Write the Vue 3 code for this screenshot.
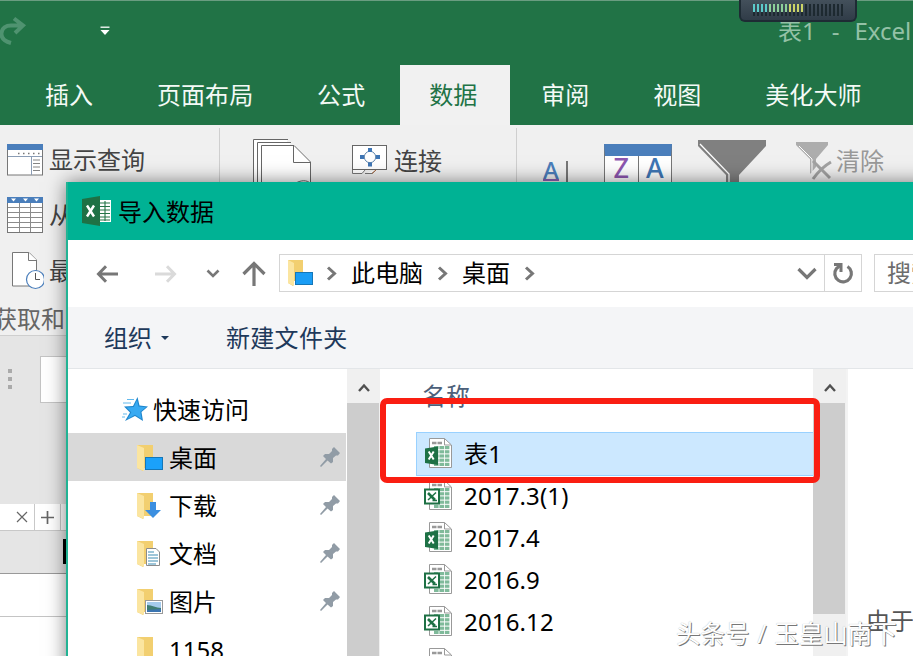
<script setup>
const tabs = ['插入', '页面布局', '公式', '数据', '审阅', '视图', '美化大师']
const places = [
  { name: '桌面', kind: 'desktop', pinned: true, active: true },
  { name: '下载', kind: 'download', pinned: true },
  { name: '文档', kind: 'doc', pinned: true },
  { name: '图片', kind: 'pic', pinned: true },
  { name: '1158', kind: 'plain' },
]
const files = [
  { name: '表1', modern: true, active: true },
  { name: '2017.3(1)' },
  { name: '2017.4', modern: true },
  { name: '2016.9' },
  { name: '2016.12' },
  { name: '2016.10(1)' },
]
const cells = [0, 1, 2, 3, 4].flatMap((r) => [0, 1, 2].map((c) => ({ x: 10 + c * 5.4, y: 8 + r * 4.2 })))
const bars = Array.from({ length: 23 }, (_, i) => i)
</script>

<template>
  <div class="screen">
    <header class="titlebar">
      <svg class="redo" width="30" height="30" viewBox="0 0 30 30" fill="none" stroke="#4f9370" stroke-width="4">
        <path d="M12 27C5 25 2 21 2.500 17C3 12 7 9.500 12 9.500H24M15 2.500L24 9.500L16 17" />
      </svg>
      <svg class="qat" width="10" height="10" viewBox="0 0 10 10">
        <path d="M0.500 1.200H9.500" stroke="#fff" stroke-width="1.300" /><path d="M0.500 4H9.500L5 9Z" fill="#fff" />
      </svg>
      <span class="doc-title">表1<i>-</i>Excel</span>
    </header>
    <nav class="tabs">
      <span v-for="t in tabs" :key="t" class="tab" :class="{ current: t === '数据' }">{{ t }}</span>
    </nav>

    <section class="ribbon">
      <div class="group query">
        <div class="cmd">
          <svg width="37" height="32" viewBox="0 0 37 32">
            <rect x=".5" y=".5" width="35" height="30.500" fill="#fff" stroke="#777" />
            <rect width="36" height="6" fill="#4a7ebb" />
            <path d="M11 9.500H35" stroke="#777" stroke-width="1.500" stroke-dasharray="1.500 3.500" />
            <path d="M1 12.500H35M24.500 13V31" stroke="#8b9db5" />
            <path d="M26 16H33M26 19.500H33M26 23H33M26 26.500H33" stroke="#777" stroke-width=".9" />
          </svg>
          <span>显示查询</span>
        </div>
        <div class="cmd">
          <svg width="37" height="37" viewBox="0 0 37 37">
            <rect x=".5" y=".5" width="35" height="35" fill="#fff" stroke="#777" />
            <rect width="36" height="6" fill="#4a7ebb" />
            <path d="M4 1.500H9L6.500 4.500ZM16 1.500H21L18.500 4.500ZM27 1.500H32L29.500 4.500Z" fill="#fff" />
            <path d="M1 10.500H35M1 15.500H35M1 20.500H35M1 25.500H35M1 30.500H35M12.500 6V35M23.500 6V35" stroke="#8b8b8b" />
          </svg>
          <span>从</span>
        </div>
        <div class="cmd">
          <svg width="37" height="38" viewBox="0 0 37 38" fill="#fff" stroke="#777">
            <path d="M5.500 .5H22L29.500 8V34H5.500Z" /><path d="M21.500 .5V8.500H30" />
            <circle cx="28.500" cy="27.500" r="9" stroke="#4a7ebb" stroke-width="1.200" /><path d="M28.500 21V27.500H33" fill="none" stroke="#555" />
          </svg>
          <span>最</span>
        </div>
        <div class="caption">获取和</div>
      </div>
      <div class="group conn">
        <svg class="pages" width="60" height="66" viewBox="0 0 60 66" fill="#fff" stroke="#666">
          <path d="M.5 66V.5H35M4.500 66V3.500H38" /><path d="M8.500 66V6.500H41L57.500 23V66" />
          <path d="M40.500 7V23.500H57" /><path d="M43 44C48 41 54 41 57 44" />
        </svg>
        <div class="link">
          <svg width="36" height="30" viewBox="0 0 36 30">
            <rect x=".5" y=".5" width="34" height="24" fill="#fff" stroke="#666" />
            <path d="M.5 25V28.500H10L13 25M13 28.500H20L24 25" fill="#fff" stroke="#777" /><path d="M20 28.500L24 25" stroke="#a9673d" />
            <circle cx="18" cy="12" r="5.700" fill="#fff" stroke="#6388ae" />
            <path d="M16 3H20V7H16ZM16 17.500H20V21.500H16ZM8 10H12V14H8ZM24 10H28V14H24Z" fill="#3f76b5" />
          </svg>
          <span>连接</span>
        </div>
      </div>
      <div class="group sort">
        <div class="az"><b>A</b><em></em></div>
        <div class="za"><b class="z">Z</b><b>A</b></div>
        <svg class="funnel" width="68" height="66" viewBox="0 0 68 66">
          <path d="M0 0H68V6L41 35V66H28V35L0 6Z" fill="#808080" /><path d="M2 4L31 34V50" fill="none" stroke="#fff" stroke-width="1.300" />
        </svg>
        <div class="clear">
          <svg width="36" height="39" viewBox="0 0 36 39">
            <path d="M0 0H32V3L20 17V25L14 32V17L0 3Z" fill="#adadad" /><path d="M3 4L16 17V30" fill="none" stroke="#fff" />
            <path d="M17 19L34 36M35 20C28 24 22 30 17 37" fill="none" stroke="#a2a2a2" stroke-width="3" />
          </svg>
          <span>清除</span>
        </div>
      </div>
    </section>

    <section class="formula">
      <div class="dots"><i></i><i></i><i></i></div>
      <div class="namebox"></div>
    </section>
    <section class="sheet-tabs">
      <span class="sheet"><svg width="12" height="12" viewBox="0 0 12 12" stroke="#666" stroke-width="1.200"><path d="M1 1L11 11M11 1L1 11" /></svg></span>
      <span class="add"><svg width="13" height="13" viewBox="0 0 13 13" stroke="#666" stroke-width="1.700"><path d="M0 6.500H13M6.500 0V13" /></svg></span>
      <span class="rest"></span>
    </section>
    <section class="colhead"><i></i></section>
    <section class="cells"></section>

    <div class="meter"><i v-for="b in bars" :key="b" :class="{ cyan: b < 4, mint: b > 3 && b < 9, lime: b > 8 && b < 13 }"></i></div>

    <div class="dialog">
      <div class="dlg-title">
        <svg width="30" height="30" viewBox="0 0 30 30">
          <path d="M17 4H29V26H17Z" fill="#fff" />
          <path d="M18 7H28M18 10.500H28M18 14H28M18 17.500H28M18 21H28M18 24H28M23 5V25" stroke="#247447" stroke-width="1.100" />
          <path d="M0 3L18 0V30L0 27Z" fill="#1e7145" /><path d="M5 9.500L12 20.500M12 9.500L5 20.500" stroke="#fff" stroke-width="2.400" />
        </svg>
        <span>导入数据</span>
      </div>
      <div class="dlg-nav">
        <svg class="back" width="23" height="18" viewBox="0 0 23 18" fill="none" stroke="#777" stroke-width="3"><path d="M22 9H3M10 1.200L2.500 9L10 16.800" /></svg>
        <svg class="fwd" width="23" height="18" viewBox="0 0 23 18" fill="none" stroke="#dadada" stroke-width="3"><path d="M1 9H20M13 1.200L20.500 9L13 16.800" /></svg>
        <svg class="hist" width="14" height="9" viewBox="0 0 14 9" fill="none" stroke="#777" stroke-width="2.600"><path d="M1.500 1.500L7 7L12.500 1.500" /></svg>
        <svg class="up" width="24" height="25" viewBox="0 0 24 25" fill="none" stroke="#777" stroke-width="3.200"><path d="M12 25V3M1.500 13L12 2.500L22.500 13" /></svg>
        <div class="address">
          <svg width="28" height="28" viewBox="0 0 28 28">
            <path d="M1 1H16V22H6V27L1 24Z" fill="#f2cf70" /><path d="M1 1L7 4V27L1 24Z" fill="#fbe5a0" />
            <rect x="8.500" y="13.500" width="17" height="12" fill="#1a9df5" stroke="#1577b8" />
          </svg>
          <svg class="chev c1" width="11" height="15" viewBox="0 0 11 15"><path d="M2 1.500L8.500 7.500L2 13.500" /></svg>
          <span>此电脑</span>
          <svg class="chev c2" width="11" height="15" viewBox="0 0 11 15"><path d="M2 1.500L8.500 7.500L2 13.500" /></svg>
          <span>桌面</span>
          <svg class="chev c3" width="11" height="15" viewBox="0 0 11 15"><path d="M2 1.500L8.500 7.500L2 13.500" /></svg>
          <svg class="drop" width="20" height="13" viewBox="0 0 20 13" fill="none" stroke="#777" stroke-width="3.200"><path d="M1.500 2L10 10.500L18.500 2" /></svg>
          <div class="refresh"><svg width="22" height="23" viewBox="0 0 22 23"><path d="M15.500 4.500A8.300 8.300 0 1 1 4.500 6.500L8 3.500" fill="none" stroke="#777" stroke-width="3.200" /><path d="M2 1H10.500V10H7.500V4H2Z" fill="#777" /></svg></div>
        </div>
        <div class="search">搜索</div>
      </div>
      <div class="dlg-tools"><span>组织</span><i></i><span class="newdir">新建文件夹</span></div>
      <div class="dlg-body">
        <aside class="side">
          <div class="quick">
            <svg width="26" height="25" viewBox="0 0 26 25">
              <path d="M15.500 0L17.500 8.500L26 9.500L19.500 15L21 24L13 19L3 24L8 15.500L2 9.500L11 9Z" fill="#1f86cc" /><path d="M15 3L16.500 9.500L24 10.200L18.300 14.700L19.500 22L13 17.800L5.500 22L9.300 15.200L4.500 10.500L11.800 10Z" fill="#38aaf2" /><path d="M5 2.500H12M1 6H9M1 17H5M0 20H3" stroke="#62b9ed" />
            </svg>
            <span>快速访问</span>
          </div>
          <div v-for="p in places" :key="p.name" class="place" :class="{ active: p.active }">
            <svg width="28" height="28" viewBox="0 0 28 28">
              <path d="M1 1H17V24H7V27L1 24Z" fill="#f2cf70" /><path d="M1 1L8 4V27L1 24Z" fill="#fbe5a0" />
              <g v-if="p.kind === 'desktop'"><rect x="9.500" y="13.500" width="17" height="12" fill="#1ba1fa" stroke="#1577b8" /></g>
              <path v-if="p.kind === 'download'" d="M14 10H20V18H25L17 26L9 18H14Z" fill="#3c8fe0" />
              <g v-if="p.kind === 'doc'">
                <path d="M10.500 8.500H20L23.500 12V25.500H10.500Z" fill="#fff" stroke="#8c8c8c" />
                <path d="M12 12H18M12 15H22M12 18H22M12 21H22M12 24H20" stroke="#3f8db4" stroke-width="1.200" />
              </g>
              <g v-if="p.kind === 'pic'">
                <rect x="9.500" y="12.500" width="17" height="13" fill="#fff" stroke="#999" /><rect x="11" y="14" width="14" height="10" fill="#a4cbed" />
                <path d="M11 17C16 17 20 20 25 20V24H11Z" fill="#3f7d73" /><path d="M11 22L25 21V24H11Z" fill="#3b74b0" />
              </g>
            </svg>
            <span>{{ p.name }}</span>
            <svg v-if="p.pinned" class="pin" width="20" height="20" viewBox="0 0 20 20"><path d="M14 0L20 6L18 8.500H16L13 11V15L11 16.500L7.500 13.500L1 20L0 19L6 12L3 9L5 7H9L12 4V2Z" fill="#919ca6" /></svg>
          </div>
        </aside>
        <div class="scroll full"><div class="cap"><svg width="12" height="10" viewBox="0 0 12 10"><path d="M1 8L6 2.500L11 8" fill="none" stroke="#505050" stroke-width="2.400" /></svg></div><div class="thumb"></div></div>
        <main class="list">
          <div class="head">名称</div>
          <div v-for="f in files" :key="f.name" class="file" :class="{ active: f.active }">
            <svg width="28" height="30" viewBox="0 0 28 30">
              <path d="M5.500 .5H20.500L27.500 7V29.500H5.500Z" fill="#fff" stroke="#999" /><path d="M20.500 .5V7H27" fill="none" stroke="#999" />
              <path d="M8 5H18" stroke="#999" stroke-width="2.500" stroke-dasharray="4.500 1" />
              <rect v-for="(c, i) in cells" :key="i" :x="c.x" :y="c.y" width="4.600" height="3.200" fill="#7fba9a" />
              <g v-if="f.modern"><path d="M1 10.500L14 8.500V27L1 25Z" fill="#1e7145" /><path d="M4.700 13.500L9.700 21.500M9.700 13.500L4.700 21.500" stroke="#fff" stroke-width="2" /></g>
              <g v-else><rect x="1" y="9.500" width="14" height="14" fill="#fff" stroke="#1e7145" stroke-width="2" /><path d="M4 13L11 20" stroke="#1e7145" stroke-width="2.600" /><path d="M12 12.500L4 20M8.500 20.500H13" stroke="#1e7145" stroke-width="1.500" /></g>
            </svg>
            <span>{{ f.name }}</span>
          </div>
        </main>
        <div class="scroll part"><div class="cap"><svg width="12" height="10" viewBox="0 0 12 10"><path d="M1 8L6 2.500L11 8" fill="none" stroke="#505050" stroke-width="2.400" /></svg></div><div class="thumb"></div></div>
        <div class="preview">由于</div>
      </div>
    </div>

    <div class="marker"></div>
    <div class="watermark">头条号 / 玉皇山南下</div>
  </div>
</template>

<style>
body { margin: 0; overflow: hidden; }
</style>
<style scoped>
* { box-sizing: border-box; }
.screen { position: relative; width: 913px; height: 656px; overflow: hidden; display: flex; flex-direction: column; background: #fff; font: 24px/32px "Noto Sans", "Noto Sans CJK SC", sans-serif; color: #000; white-space: nowrap; }
svg { display: block; flex: none; }
.screen span { flex: none; }
.titlebar { height: 65px; flex: none; background: #217346; border-top: 1px solid #6a9d81; display: flex; align-items: flex-start; }
.redo { margin-top: 15px; margin-left: -1px; }
.qat { margin: 25px 0 0 71px; }
.doc-title { margin: 14px 0 0 668px; color: #94c1a6; }
.doc-title i { font-style: normal; margin: 0 15px 0 16px; }
.tabs { height: 60px; flex: none; background: #217346; display: flex; padding-left: 13px; }
.tab { color: #f4faf6; padding: 0 31.900px; line-height: 59px; letter-spacing: .1px; }
.tab.current { background: #f1f1f1; color: #217346; margin-left: 3px; padding: 0 33px 0 29px; margin-right: -1px; }
.ribbon { height: 211px; flex: none; background: #f0f0f0; border-bottom: 1px solid #cfcfcf; display: flex; color: #444; }
.group { flex: none; display: flex; border-right: 1px solid #cfcfcf; margin-top: 3px; height: 204px; }
.query { width: 220px; flex-direction: column; padding: 4px 0 0 7px; }
.cmd { height: 55.500px; flex: none; display: flex; align-items: center; gap: 5px; }
.caption { margin: 0 0 0 -14px; line-height: 40px; color: #666; flex: none; }
.conn { width: 297px; padding: 11px 0 0 33px; gap: 39px; }
.link { display: flex; gap: 6px; height: 44px; align-items: center; }
.link svg { margin-top: -2px; }
.sort { width: 400px; border: 0; padding-left: 26px; align-items: flex-start; }
.az { display: flex; margin-top: 29px; width: 61px; font: 24px/28px "Noto Sans"; gap: 7px; color: #4a7ebb; }
.az b, .za b { font-weight: 500; }
.az b { border-bottom: 2px solid #8d60b5; height: 24px; line-height: 26px; font-size: 24px; }
.az em { width: 2px; height: 40px; background: #777; margin-top: 4px; }
.za { display: flex; margin-top: 16px; width: 68px; height: 60px; background: #fff; border: 1px solid #777; border-top: 12px solid #4a7ebb; color: #3f76b5; font: 27px/24px "Noto Sans"; text-align: center; }
.za b { flex: 1; }
.za .z { color: #8d57b0; border-right: 1px solid #777; }
.funnel { margin: 12px 0 0 26px; }
.clear { display: flex; margin: 14px 0 0 30px; gap: 4px; color: #999; }
.clear span { margin-top: 3px; }
.formula { height: 168px; flex: none; background: #e5e5e5; display: flex; align-items: flex-start; padding: 20px 0 0 8px; }
.dots { display: flex; flex-direction: column; gap: 4px; width: 32px; padding-top: 13px; }
.dots i { width: 4px; height: 4px; background: #aaa; }
.namebox { width: 300px; height: 47px; background: #fff; border: 1px solid #c4c4c4; }
.sheet-tabs { height: 27px; flex: none; background: #e5e5e5; display: flex; }
.sheet-tabs span { background: #fff; display: flex; align-items: center; border: 0 solid #c8c8c8; border-width: 0 1px 1px 0; }
.sheet { width: 35px; padding-left: 16px; }
.add { width: 26px; justify-content: center; }
.rest { width: 200px; }
.colhead { height: 43px; flex: none; background: #e5e5e5; border-bottom: 1px solid #999; padding: 8px 0 0 63px; }
.colhead i { display: block; width: 5px; height: 25px; background: #000; }
.cells { height: 43px; flex: none; border-bottom: 1px solid #c4c4c4; }
.meter { position: absolute; left: 739px; top: 0; width: 118px; height: 22px; background: linear-gradient(#43505b, #303c48); border: 2px solid #1e2b34; border-top: 0; border-radius: 0 0 6px 6px; display: flex; gap: 2px; padding: 4px 0 0 12px; }
.meter i { width: 2px; height: 12px; background: #1d2930; }
.meter .cyan, .meter .mint, .meter .lime { height: 8px; box-shadow: 0 4px 0 #1d2930; }
.meter .cyan { background: #5ccbcb; }
.meter .mint { background: #8dcf9a; }
.meter .lime { background: #cbd567; }
.dialog { position: absolute; left: 66px; top: 182px; width: 900px; height: 500px; border-left: 2px solid #22b394; background: #fff; box-shadow: 0 0 18px rgba(0, 0, 0, .5); display: flex; flex-direction: column; }
.dlg-title { height: 58px; flex: none; background: #00b294; display: flex; align-items: center; gap: 6px; padding: 2px 0 0 14px; }
.dlg-title svg { margin-top: -2px; }
.dlg-nav { height: 67px; flex: none; display: flex; align-items: center; padding-left: 28px; }
.fwd { margin-left: 35px; }
.hist { margin-left: 29px; }
.up { margin-left: 22px; }
.address { width: 583px; height: 38px; flex: none; margin: -1px 0 0 13px; border: 1px solid #d5d5d5; display: flex; align-items: center; padding-left: 7px; }
.address span { margin-top: -1px; }
.chev { fill: none; stroke: #777; stroke-width: 3; }
.c1 { margin: 0 14px 0 11px; }
.c2 { margin: 0 14px 0 14px; }
.c3 { margin-left: 14px; }
.drop { margin-left: auto; }
.refresh { width: 37px; height: 36px; border-left: 1px solid #d5d5d5; display: flex; align-items: center; justify-content: center; margin-left: 7px; }
.search { margin: -1px 0 0 12px; width: 200px; height: 38px; border: 1px solid #d5d5d5; padding-left: 12px; line-height: 36px; color: #6d6d6d; }
.dlg-tools { height: 62px; flex: none; background: #f4f5f7; border-bottom: 1px solid #e3e6e9; display: flex; align-items: center; padding-left: 36px; color: #1e395b; }
.dlg-tools i { margin-left: 9px; border: 4px solid transparent; border-top-color: #1e395b; border-bottom: 0; }
.newdir { margin-left: 57px; letter-spacing: .3px; }
.dlg-body { flex: 1; display: flex; }
.side { width: 279px; flex: none; padding-top: 16px; }
.quick { height: 48px; display: flex; align-items: center; gap: 5px; padding-left: 54px; }
.quick span, .place span { margin-top: 1px; }
.place { height: 48px; display: flex; align-items: center; gap: 5px; padding-left: 68px; margin-right: 1px; }
.place.active { background: #d9d9d9; }
.place svg { margin-top: 1px; }
.place .pin { margin: 0 6px 0 auto; }
.scroll { width: 33px; flex: none; background: #f0f0f0; }
.cap { height: 34px; display: flex; align-items: center; justify-content: center; padding-top: 4px; }
.thumb { width: 32px; height: 300px; background: #cdcdcd; }
.part .thumb { height: 211px; }
.list { width: 433px; flex: none; padding: 11px 0 0 36px; }
.head { height: 52px; padding-left: 6px; color: #4c607a; line-height: 31px; }
.file { height: 42px; display: flex; align-items: center; gap: 12px; padding-left: 8px; letter-spacing: .15px; }
.file svg { margin-top: -2px; }
.file.active { height: 44px; background: #cce8ff; border: 1px solid #99d1ff; border-right: 0; padding-left: 7px; margin-bottom: -1px; }
.preview { width: 90px; flex: none; border-left: 2px solid #f3f3f3; padding: 236px 0 0 18px; color: #555; }
.marker { position: absolute; left: 380px; top: 398px; width: 440px; height: 85px; border: 6px solid #fa1e12; border-radius: 7px; }
.watermark { position: absolute; left: 676px; top: 618px; color: #fff; font-size: 24.500px; word-spacing: 1.500px; text-shadow: 1px 1px 0 #777, 0 0 1px #aaa; }
</style>
